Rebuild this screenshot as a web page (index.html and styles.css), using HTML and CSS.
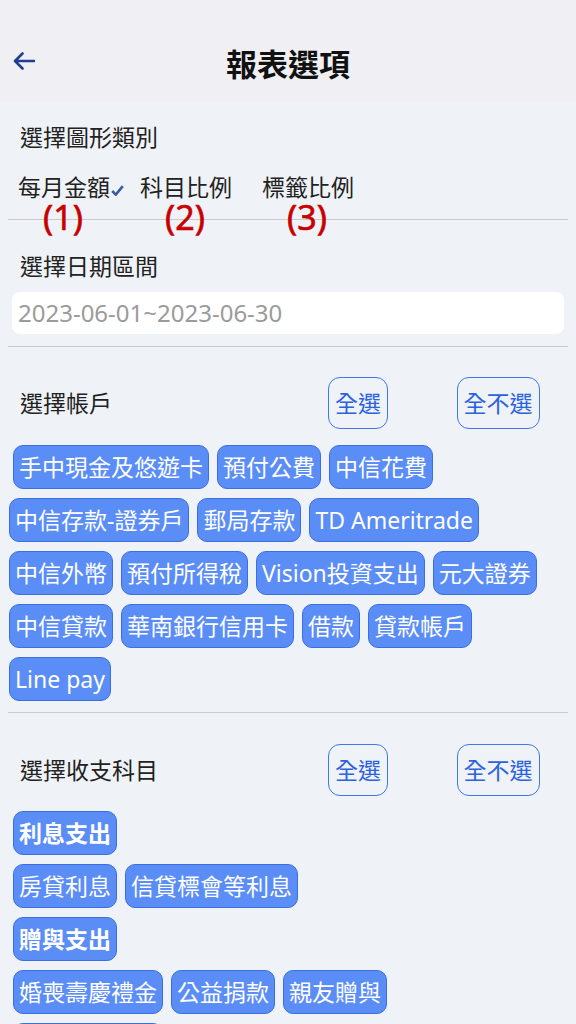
FILE: index.html
```html
<!DOCTYPE html>
<html lang="zh-Hant">

	<head>
		<meta charset="UTF-8" />
		<meta name="viewport" content="width=device-width, initial-scale=1.0" />
		<title>報表選項</title>
		<link rel="stylesheet" href="styles.css">
	</head>

	<body>
		<header class="topbar">
			<a class="back">
				<svg width="22" height="18" viewBox="0 0 22 18">
					<path d="M21 9H2.5M9.5 1.5L2 9l7.5 7.5" fill="none" stroke="#1f3f90" stroke-width="2.6" stroke-linecap="round" stroke-linejoin="round" />
				</svg>
			</a>
			<h1 class="title">報表選項</h1>
			<span></span>
		</header>

		<main class="panel">
			<!-- chart type -->
			<div class="label first">選擇圖形類別</div>
			<div class="options">
				<div class="option">每月金額<svg class="check" width="13" height="11" viewBox="0 0 13 11"><path d="M1.2 6L4.8 9.6 11.8 1.2" fill="none" stroke="#3d5b9e" stroke-width="2.6" /></svg><span class="mark">(1)</span></div>
				<div class="option">科目比例<span class="mark">(2)</span></div>
				<div class="option">標籤比例<span class="mark">(3)</span></div>
			</div>
			<div class="rule type-rule"></div>

			<!-- date range -->
			<div class="label gap">選擇日期區間</div>
			<div class="date-box">2023-06-01~2023-06-30</div>
			<div class="rule date-rule"></div>

			<!-- accounts -->
			<div class="select-head">
				<div class="label">選擇帳戶</div>
				<button class="pill-btn">全選</button>
				<button class="pill-btn">全不選</button>
			</div>
			<div class="chips accounts">
				<span class="chip">手中現金及悠遊卡</span>
				<span class="chip">預付公費</span>
				<span class="chip">中信花費</span>
				<span class="chip">中信存款-證券戶</span>
				<span class="chip">郵局存款</span>
				<span class="chip">TD Ameritrade</span>
				<span class="chip">中信外幣</span>
				<span class="chip">預付所得稅</span>
				<span class="chip">Vision投資支出</span>
				<span class="chip">元大證券</span>
				<span class="chip">中信貸款</span>
				<span class="chip">華南銀行信用卡</span>
				<span class="chip">借款</span>
				<span class="chip">貸款帳戶</span>
				<span class="chip">Line pay</span>
			</div>
			<div class="rule acc-rule"></div>

			<!-- categories -->
			<div class="select-head second">
				<div class="label">選擇收支科目</div>
				<button class="pill-btn">全選</button>
				<button class="pill-btn">全不選</button>
			</div>
			<div class="groups">
				<div class="chips"><span class="chip bold">利息支出</span></div>
				<div class="chips">
					<span class="chip">房貸利息</span>
					<span class="chip">信貸標會等利息</span>
				</div>
				<div class="chips"><span class="chip bold">贈與支出</span></div>
				<div class="chips">
					<span class="chip">婚喪壽慶禮金</span>
					<span class="chip">公益捐款</span>
					<span class="chip">親友贈與</span>
				</div>
				<div class="chips"><span class="chip bold">交通運輸支出</span></div>
			</div>
		</main>
	</body>

</html>
```

FILE: styles.css
```css
body {
	margin: 0;
	width: 576px;
	height: 1024px;
	overflow: hidden;
	background: #eff2f6;
	font-family: "Noto Sans", "Noto Sans CJK TC", sans-serif;
	color: #222;
}

.topbar {
	height: 102px;
	box-sizing: border-box;
	padding-top: 26px;
	background: #efeff4;
	display: grid;
	grid-template-columns: 1fr auto 1fr;
	align-items: center;
}

.back {
	display: flex;
	padding-left: 13px;
	margin-bottom: 6px;
}

.title {
	margin: 0;
	font-size: 31px;
	line-height: 40px;
	font-weight: 700;
	color: #111;
}

.panel {
	padding: 0 8px;
}

.label {
	font-size: 23px;
	line-height: 32px;
	padding-left: 12px;
}

.label.first {
	margin-top: 19px;
}

.label.gap {
	margin-top: 30px;
}

.options {
	display: flex;
	margin-top: 19px;
	padding-left: 10px;
}

.option {
	position: relative;
	width: 122px;
	font-size: 23px;
	line-height: 30px;
	white-space: nowrap;
}

.check {
	margin-left: 1px;
}

/* red annotations drawn over the row */
.mark {
	position: absolute;
	left: 25px;
	top: 30px;
	font-size: 34px;
	line-height: 30px;
	color: #c80000;
	-webkit-text-stroke: 0.6px #c80000;
}

.rule {
	border-top: 1px solid #cacace;
	margin-top: 16px;
}

.type-rule {
	margin-top: 17px;
}

.date-box {
	margin: 10px 4px 0;
	height: 42px;
	padding-left: 6px;
	background: #fff;
	border-radius: 8px;
	font-size: 24px;
	line-height: 42px;
	color: #9b9b9b;
}

.date-rule {
	margin-top: 12px;
}

.select-head {
	display: grid;
	grid-template-columns: 2fr 1fr 1fr;
	align-items: center;
	margin-top: 30px;
}

.select-head.second {
	margin-top: 31px;
}

.pill-btn {
	justify-self: center;
	padding: 9px 6px;
	border: 1px solid #3c78ea;
	border-radius: 12px;
	background: transparent;
	font-family: inherit;
	font-size: 23px;
	line-height: 32px;
	color: #2a62e0;
}

.chips {
	display: flex;
	flex-wrap: wrap;
	gap: 9px 8px;
}

.chips.accounts {
	margin-top: 16px;
	padding-left: 1px;
}

.chips.accounts .chip:first-child {
	margin-left: 4px;
}

.chip {
	padding: 6px 5px;
	border: 1px solid #3a6fe3;
	border-radius: 10px;
	background: #5b8df6;
	font-size: 23px;
	line-height: 30px;
	color: #fff;
	white-space: nowrap;
}

.chip.bold {
	font-weight: 700;
}

.acc-rule {
	margin-top: 11px;
}

.groups {
	display: flex;
	flex-direction: column;
	gap: 9px;
	margin-top: 15px;
	padding-left: 5px;
}
```
